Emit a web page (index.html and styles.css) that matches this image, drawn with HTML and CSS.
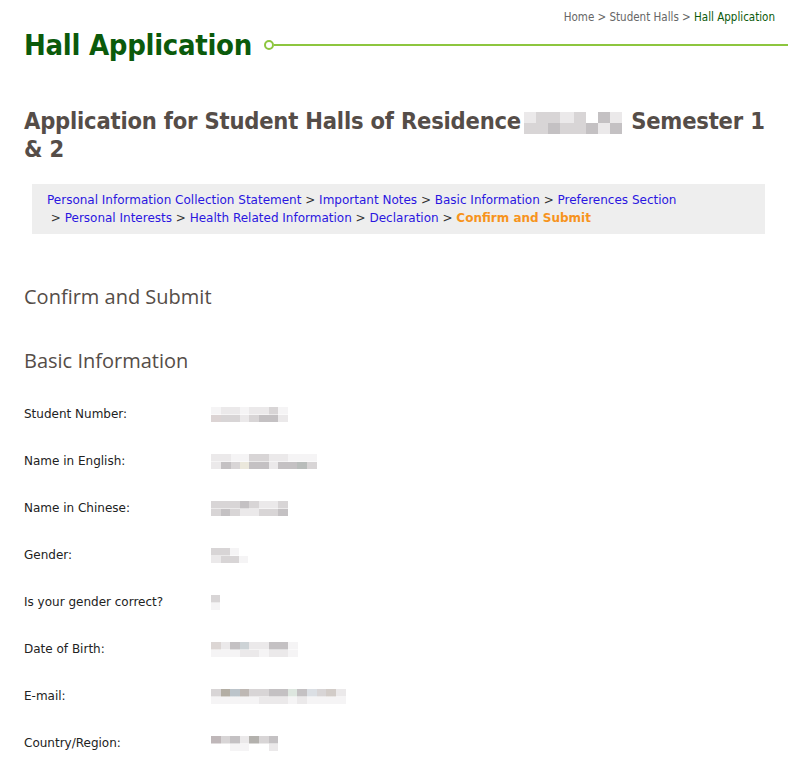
FILE: index.html
```html
<!DOCTYPE html>
<html lang="en">
<head>
  <meta charset="UTF-8" />
  <title>Hall Application</title>
  <link rel="stylesheet" href="styles.css">
</head>
<body>
  <div class="page">

    <div class="crumbs">
      <a href="#">Home</a> &gt; <a href="#">Student Halls</a> &gt; <span class="here">Hall Application</span>
    </div>

    <div class="title-bar">
      <h1>Hall Application</h1>
      <span class="dot"></span>
      <span class="rule"></span>
    </div>

    <h2 class="app-title">Application for Student Halls of Residence<span class="blur b-year"></span> Semester 1 &amp; 2</h2>

    <div class="steps">
      <a href="#">Personal Information Collection Statement</a> &gt;
      <a href="#">Important Notes</a> &gt;
      <a href="#">Basic Information</a> &gt;
      <a href="#">Preferences Section</a><br>
      &nbsp;&gt; <a href="#">Personal Interests</a> &gt;
      <a href="#">Health Related Information</a> &gt;
      <a href="#">Declaration</a> &gt;
      <span class="current">Confirm and Submit</span>
    </div>

    <h3>Confirm and Submit</h3>

    <h3>Basic Information</h3>

    <div class="info">
      <div class="row">
        <div class="label">Student Number:</div>
        <div class="value"><span class="blur b-number"></span></div>
      </div>
      <div class="row">
        <div class="label">Name in English:</div>
        <div class="value"><span class="blur b-name-en"></span></div>
      </div>
      <div class="row">
        <div class="label">Name in Chinese:</div>
        <div class="value"><span class="blur b-name-zh"></span></div>
      </div>
      <div class="row">
        <div class="label">Gender:</div>
        <div class="value"><span class="blur b-gender"></span></div>
      </div>
      <div class="row">
        <div class="label">Is your gender correct?</div>
        <div class="value"><span class="blur b-yes"></span></div>
      </div>
      <div class="row">
        <div class="label">Date of Birth:</div>
        <div class="value"><span class="blur b-dob"></span></div>
      </div>
      <div class="row">
        <div class="label">E-mail:</div>
        <div class="value"><span class="blur b-email"></span></div>
      </div>
      <div class="row">
        <div class="label">Country/Region:</div>
        <div class="value"><span class="blur b-country"></span></div>
      </div>
    </div>

  </div>
</body>
</html>
```

FILE: styles.css
```css
:root {
  --green: #0b5a0b;
  --lime: #8dc63f;
  --grey: #554d48;
  --link: #2a16e0;
  --orange: #f7941d;
  --px1: #ebe9ea;
  --px2: #d8d5d6;
  --px3: #c4c1c3;
  --px4: #f5f4f5;
}

* {
  box-sizing: border-box;
}

body {
  margin: 0;
  font-family: "DejaVu Sans", Verdana, sans-serif;
  color: #222;
  background: #fff;
}

.page {
  width: 800px;
  padding: 8px 12px 0 24px;
}

a {
  text-decoration: none;
}

/* top right breadcrumb */
.crumbs {
  text-align: right;
  font-family: "DejaVu Sans Condensed", "DejaVu Sans", sans-serif;
  font-size: 11.5px;
  line-height: 18px;
  color: #666;
  padding-right: 13px;
}

.crumbs a {
  color: #666;
}

.crumbs .here {
  color: var(--green);
}

.title-bar {
  display: flex;
  align-items: center;
}

h1 {
  margin: 0;
  font-family: "DejaVu Sans Condensed", "DejaVu Sans", sans-serif;
  font-size: 29px;
  font-weight: bold;
  line-height: 38px;
  color: var(--green);
  letter-spacing: -0.3px;
}

.dot {
  width: 10px;
  height: 10px;
  border: 2px solid var(--lime);
  border-radius: 50%;
  margin-left: 12px;
  flex: none;
}

.rule {
  flex: 1;
  height: 2px;
  background: var(--lime);
}

.app-title {
  margin: 43px 0 0;
  font-family: "DejaVu Sans Condensed", "DejaVu Sans", sans-serif;
  font-size: 23.5px;
  line-height: 28px;
  font-weight: bold;
  color: var(--grey);
  letter-spacing: -0.2px;
}

/* pixelated, hidden values: two rows of grey cells */
.blur {
  display: inline-block;
  vertical-align: middle;
  height: 15px;
  background-repeat: no-repeat;
  background-size: 100% 50%;
  background-position: top, bottom;
}

.b-year {
  width: 98px;
  height: 22px;
  margin: 0 2px 0 3px;
  background-image:
    linear-gradient(90deg, var(--px1) 0 12px, var(--px2) 12px 36px, var(--px1) 36px 50px, var(--px2) 50px 62px, #fff 62px 74px, var(--px3) 74px 86px, var(--px1) 86px),
    linear-gradient(90deg, var(--px2) 0 24px, var(--px3) 24px 36px, var(--px2) 36px 62px, var(--px3) 62px 74px, var(--px1) 74px 86px, var(--px3) 86px);
}

.b-number {
  width: 77px;
  background-image:
    linear-gradient(90deg, var(--px4) 0 10px, var(--px1) 10px 29px, var(--px4) 29px 38px, var(--px1) 38px 58px, var(--px2) 58px 67px, var(--px4) 67px),
    linear-gradient(90deg, #dcd4d4 0 10px, var(--px2) 10px 29px, var(--px1) 29px 38px, var(--px2) 38px 48px, var(--px3) 48px 67px, var(--px1) 67px);
}

.b-name-en {
  width: 106px;
  background-image:
    linear-gradient(90deg, var(--px1) 0 20px, var(--px4) 20px 38px, var(--px2) 38px 58px, var(--px1) 58px 77px, var(--px4) 77px),
    linear-gradient(90deg, var(--px1) 0 10px, var(--px3) 10px 20px, var(--px2) 20px 29px, #ebe8dc 29px 38px, var(--px3) 38px 58px, var(--px1) 58px 67px, var(--px3) 67px 86px, #b9bdbb 86px 96px, var(--px2) 96px);
}

.b-name-zh {
  width: 77px;
  background-image:
    linear-gradient(90deg, var(--px2) 0 29px, var(--px3) 29px 38px, var(--px2) 38px 48px, var(--px1) 48px 67px, var(--px2) 67px),
    linear-gradient(90deg, var(--px2) 0 10px, var(--px3) 10px 19px, var(--px2) 19px 29px, var(--px1) 29px 48px, var(--px2) 48px 67px, var(--px3) 67px);
}

.b-gender {
  width: 37px;
  background-image:
    linear-gradient(90deg, var(--px2) 0 19px, var(--px4) 19px 28px, #fff 28px),
    linear-gradient(90deg, var(--px1) 0 10px, var(--px2) 10px 28px, var(--px4) 28px);
}

.b-yes {
  width: 9px;
  background-image:
    linear-gradient(90deg, var(--px2) 0 9px),
    linear-gradient(90deg, var(--px4) 0 9px);
}

.b-dob {
  width: 87px;
  background-image:
    linear-gradient(90deg, #dcd6d4 0 10px, var(--px1) 10px 19px, var(--px3) 19px 29px, #cdd3d6 29px 38px, var(--px1) 38px 58px, var(--px3) 58px 77px, var(--px4) 77px),
    linear-gradient(90deg, var(--px4) 0 29px, var(--px1) 29px 48px, var(--px4) 48px 58px, var(--px1) 58px 77px, var(--px4) 77px);
}

.b-email {
  width: 135px;
  background-image:
    linear-gradient(90deg, var(--px2) 0 10px, #b3aea4 10px 19px, #bcc4ca 19px 29px, #beb8b4 29px 38px, var(--px2) 38px 58px, var(--px3) 58px 77px, #dde6df 77px 86px, var(--px3) 86px 96px, #dbdfe4 96px 106px, var(--px2) 106px 115px, #d2ccc8 115px 125px, var(--px1) 125px),
    linear-gradient(90deg, var(--px4) 0 48px, var(--px1) 48px 77px, var(--px4) 77px 86px, var(--px1) 86px 96px, var(--px4) 96px);
}

.b-country {
  width: 67px;
  background-image:
    linear-gradient(90deg, #bfb7b9 0 10px, var(--px2) 10px 19px, var(--px3) 19px 29px, var(--px1) 29px 38px, #b3b1ad 38px 48px, var(--px2) 48px 58px, var(--px3) 58px 67px),
    linear-gradient(90deg, #fff 0 19px, var(--px4) 19px 38px, #fff 38px 58px, var(--px1) 58px 67px);
}

.steps {
  margin: 21px 23px 0 8px;
  padding: 7px 15px 7px 15px;
  background: #eee;
  font-size: 12px;
  line-height: 18px;
  color: #333;
}

.steps a {
  color: var(--link);
}

.steps .current {
  color: var(--orange);
  font-weight: bold;
}

h3 {
  margin: 49px 0 0;
  font-family: "Open Sans", sans-serif;
  font-size: 20px;
  line-height: 28px;
  font-weight: normal;
  color: var(--grey);
}

h3 + h3 {
  margin-top: 36px;
}

.info {
  margin-top: 15px;
}

.row {
  display: flex;
  align-items: center;
  height: 47px;
}

.label {
  width: 187px;
  font-size: 12px;
}

.value {
  flex: 1;
}
```
